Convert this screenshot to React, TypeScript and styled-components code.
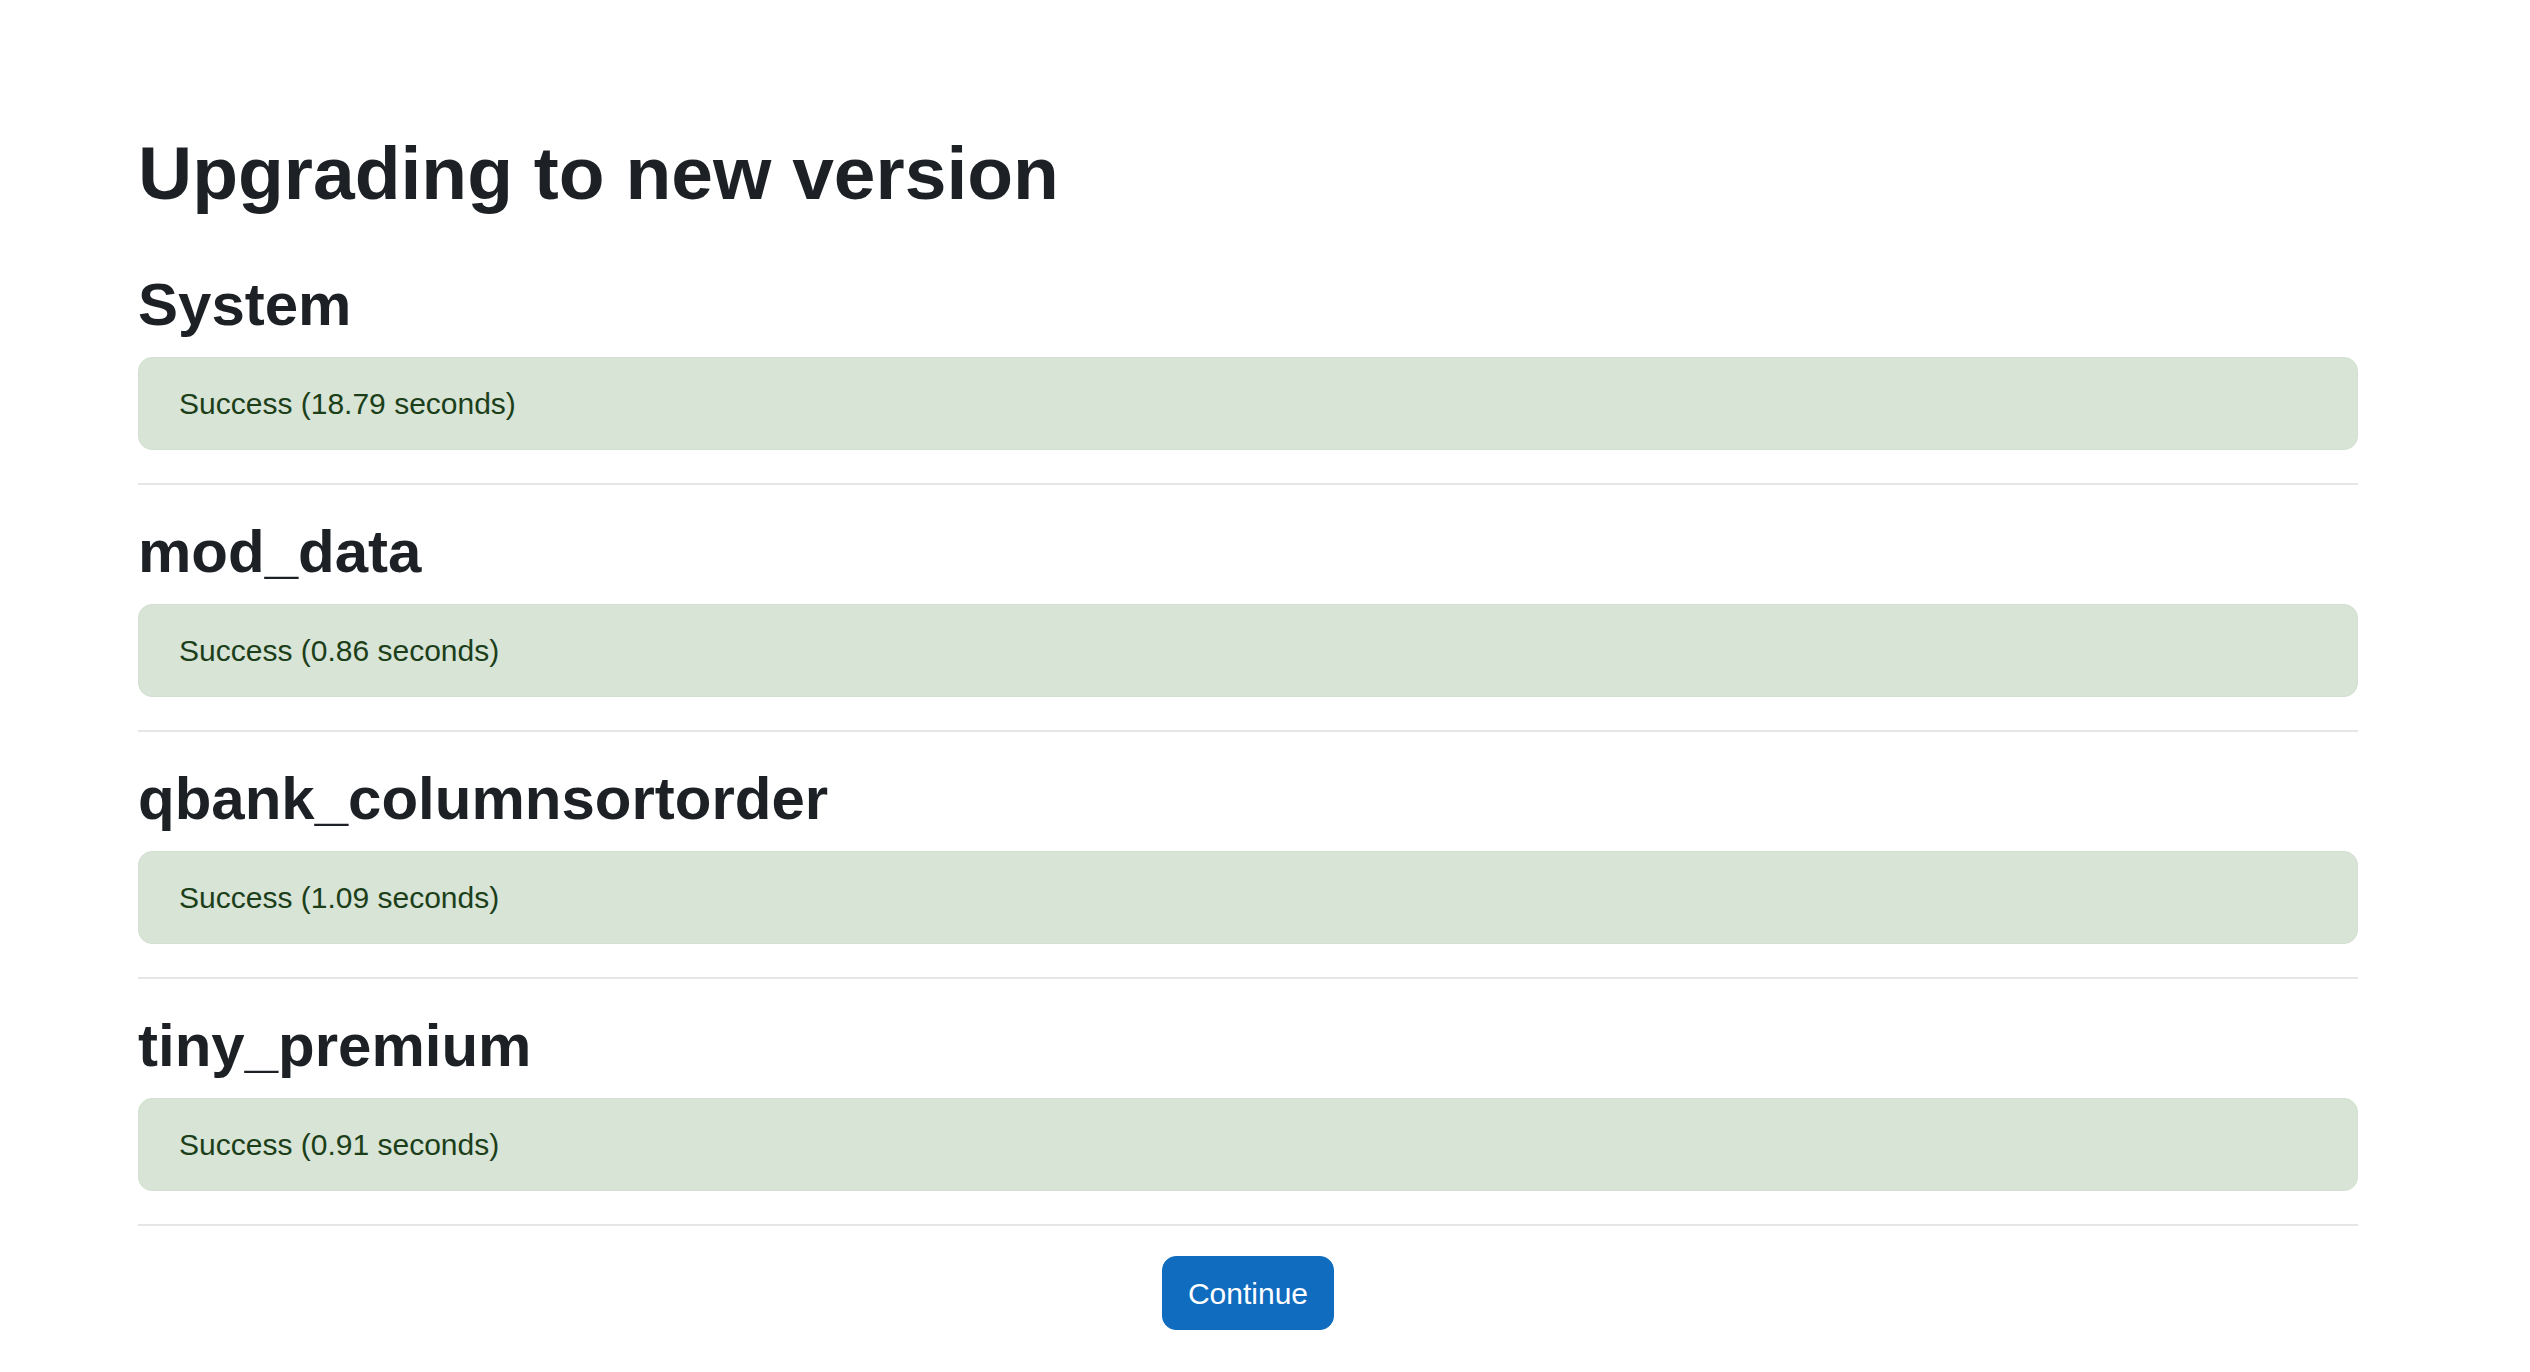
import React from "react";
import styled, { createGlobalStyle } from "styled-components";

const GlobalStyle = createGlobalStyle`
  body {
    margin: 0;
    background: #ffffff;
    font-family: "Liberation Sans", Arial, sans-serif;
    color: #1d2125;
  }
`;

const Page = styled.div`
  padding: 128px 172px 24px 138px;
`;

const Title = styled.h2`
  margin: 0 0 51px;
  font-size: 75px;
  line-height: 1.2;
  font-weight: 700;
  color: #1d2125;
`;

const Section = styled.section`
  display: flex;
  flex-direction: column;
`;

const PluginHeading = styled.h3`
  margin: 0 0 17px;
  font-size: 60px;
  line-height: 71px;
  font-weight: 700;
  color: #1d2125;
`;

const SuccessAlert = styled.div`
  padding: 23px 40px;
  font-size: 30px;
  line-height: 45px;
  color: #1c3f1a;
  background: #d7e4d6;
  border: 1px solid #d2e0d1;
  border-radius: 14px;
`;

const Divider = styled.hr<{ $last?: boolean }>`
  margin: 33px 0 ${(p) => (p.$last ? "30px" : "31px")};
  border: 0;
  border-top: 2px solid #e6e6e6;
  height: 0;
`;

const Actions = styled.div`
  display: flex;
  justify-content: center;
`;

const ContinueButton = styled.button`
  padding: 13.5px 25px;
  font-family: "Liberation Sans", Arial, sans-serif;
  font-size: 30px;
  line-height: 45px;
  color: #ffffff;
  background: #0f6cbf;
  border: 1px solid #0f6cbf;
  border-radius: 14px;
  cursor: pointer;
`;

const results = [
  { name: "System", time: "18.79" },
  { name: "mod_data", time: "0.86" },
  { name: "qbank_columnsortorder", time: "1.09" },
  { name: "tiny_premium", time: "0.91" },
];

export default function App() {
  return (
    <>
      <GlobalStyle />
      <Page>
        <Title>Upgrading to new version</Title>
        {results.map((r, i) => (
          <Section key={r.name}>
            <PluginHeading>{r.name}</PluginHeading>
            <SuccessAlert>Success ({r.time} seconds)</SuccessAlert>
            <Divider $last={i === results.length - 1} />
          </Section>
        ))}
        <Actions>
          <ContinueButton>Continue</ContinueButton>
        </Actions>
      </Page>
    </>
  );
}
